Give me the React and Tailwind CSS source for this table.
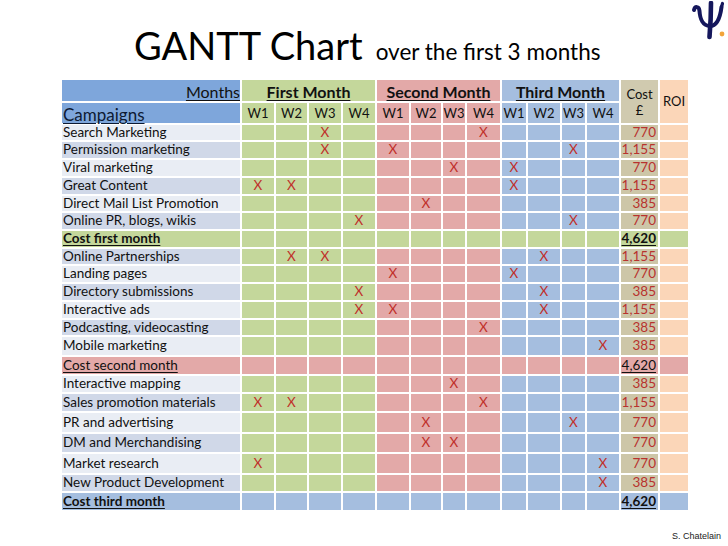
import React from "react";

const GREEN = "bg-[#c4d79b]";
const PINK = "bg-[#e3a9a8]";
const BLUE = "bg-[#a5bedf]";
const TAN = "bg-[#cdc6a8]";
const PEACH = "bg-[#fbd6b8]";
const LIGHT = "bg-[#e9edf4]";
const DARK = "bg-[#d0d8e8]";

const weekBg = (i) => (i <= 4 ? GREEN : i <= 8 ? PINK : BLUE);

const rows = [
  { name: "Search Marketing", x: [3, 8], cost: "770", shade: LIGHT },
  { name: "Permission marketing", x: [3, 5, 11], cost: "1,155", shade: DARK },
  { name: "Viral marketing", x: [7, 9], cost: "770", shade: LIGHT },
  { name: "Great Content", x: [1, 2, 9], cost: "1,155", shade: DARK },
  { name: "Direct Mail List Promotion", x: [6], cost: "385", shade: LIGHT },
  { name: "Online PR, blogs, wikis", x: [4, 11], cost: "770", shade: DARK },
  { total: "Cost first month", bg: GREEN, bold: true },
  { name: "Online Partnerships", x: [2, 3, 10], cost: "1,155", shade: DARK },
  { name: "Landing pages", x: [5, 9], cost: "770", shade: LIGHT },
  { name: "Directory submissions", x: [4, 10], cost: "385", shade: DARK },
  { name: "Interactive ads", x: [4, 5, 10], cost: "1,155", shade: LIGHT },
  { name: "Podcasting, videocasting", x: [8], cost: "385", shade: DARK },
  { name: "Mobile marketing", x: [12], cost: "385", shade: LIGHT },
  { total: "Cost second month", bg: PINK, bold: false },
  { name: "Interactive mapping", x: [7], cost: "385", shade: LIGHT },
  { name: "Sales promotion materials", x: [1, 2, 8], cost: "1,155", shade: DARK },
  { name: "PR and advertising", x: [6, 11], cost: "770", shade: LIGHT },
  { name: "DM and Merchandising", x: [6, 7], cost: "770", shade: DARK },
  { name: "Market research", x: [1, 12], cost: "770", shade: LIGHT },
  { name: "New Product Development", x: [12], cost: "385", shade: DARK },
  { total: "Cost third month", bg: BLUE, bold: true },
];

const weeks = [1, 2, 3, 4, 5, 6, 7, 8, 9, 10, 11, 12];

function Logo() {
  return (
    <svg width="36" height="40" viewBox="0 0 36 40" className="absolute right-[1px] top-[1px]">
      <path d="M20 2 C20 12 19.5 24 18.5 36" stroke="#15175c" strokeWidth="4.6" fill="none" strokeLinecap="round" />
      <path d="M3 9 C4 5 8 5 8.5 10 C9 18 12 25 19 25 C26 25 29 18 30.5 6" stroke="#15175c" strokeWidth="4" fill="none" strokeLinecap="round" />
      <path d="M30.5 6 L31.5 2.5" stroke="#15175c" strokeWidth="3.2" strokeLinecap="round" />
      <circle cx="31" cy="33" r="2.4" fill="#f2a43a" />
    </svg>
  );
}

export default function App() {
  return (
    <div className="relative w-[728px] h-[546px] bg-white overflow-hidden text-black" style={{ fontFamily: "Lato, 'Noto Sans', sans-serif" }}>
      <Logo />
      <div className="h-[80px] flex items-end pl-[134px] pb-[16px]">
        <div className="flex items-baseline">
          <span className="text-[38px] leading-none text-black">GANTT Chart</span>
          <span className="text-[22.5px] leading-none ml-[13px]">over the first 3 months</span>
        </div>
      </div>
      <div className="ml-[62px] w-[626px] grid gap-[2px] grid-cols-[178px_32px_31px_32px_32px_32px_30px_22px_33px_24px_32px_23px_32px_37px_28px] grid-rows-[21px_20px_15px_16px_16px_16px_15px_16px_16px_15px_16px_16px_16px_15px_18px_17px_16px_17px_19px_18px_19px_16px_17px] text-[13.5px] leading-none text-[#111]">
        {/* header row 1 */}
        <div className="bg-[#7ea6db] flex items-end justify-end text-[16px] pb-[1px]">
          <span className="underline underline-offset-2">Months</span>
        </div>
        <div className={`${GREEN} col-span-4 flex items-end justify-center text-[16px] font-bold pb-[1px]`}>
          <span className="underline underline-offset-2">First Month</span>
        </div>
        <div className={`${PINK} col-span-4 flex items-end justify-center text-[16px] font-bold pb-[1px]`}>
          <span className="underline underline-offset-2">Second Month</span>
        </div>
        <div className={`${BLUE} col-span-4 flex items-end justify-center text-[16px] font-bold pb-[1px]`}>
          <span className="underline underline-offset-2">Third Month</span>
        </div>
        <div className="bg-[#d0caaf] row-span-2 flex flex-col items-center justify-center text-[13px] leading-[16px]">
          <span>Cost</span>
          <span>£</span>
        </div>
        <div className={`${PEACH} row-span-2 flex items-center justify-center text-[13px]`}>ROI</div>
        {/* header row 2 */}
        <div className="bg-[#7ea6db] flex items-end text-[17px] pl-[1px]">
          <span className="underline underline-offset-2 text-[#0d1a33]">Campaigns</span>
        </div>
        {weeks.map((w) => (
          <div key={w} className={`${weekBg(w)} flex items-center justify-center text-[13px]`}>
            W{((w - 1) % 4) + 1}
          </div>
        ))}
        {/* data rows */}
        {rows.map((r, ri) =>
          r.total ? (
            <React.Fragment key={ri}>
              <div className={`${r.bg} flex items-center pl-[1px] ${r.bold ? "font-bold" : ""}`}>
                <span className="underline underline-offset-2">{r.total}</span>
              </div>
              {weeks.map((w) => (
                <div key={w} className={r.bg} />
              ))}
              <div className={`${r.bg} flex items-center justify-end pr-[2px] ${r.bold ? "font-bold" : ""}`}>
                <span className="underline underline-offset-2">4,620</span>
              </div>
              <div className={r.bg} />
            </React.Fragment>
          ) : (
            <React.Fragment key={ri}>
              <div className={`${r.shade} flex items-center pl-[1px] whitespace-nowrap`}>{r.name}</div>
              {weeks.map((w) => (
                <div key={w} className={`${weekBg(w)} flex items-center justify-center text-[#c0302a]`}>
                  {r.x.includes(w) ? "X" : ""}
                </div>
              ))}
              <div className={`${TAN} flex items-center justify-end pr-[2px] text-[#b8322e]`}>{r.cost}</div>
              <div className={PEACH} />
            </React.Fragment>
          )
        )}
      </div>
      <div className="absolute right-[7px] bottom-[3px] text-[9px] text-[#222]" style={{ fontFamily: "'Liberation Sans', Arial, sans-serif" }}>
        S. Chatelain
      </div>
    </div>
  );
}
